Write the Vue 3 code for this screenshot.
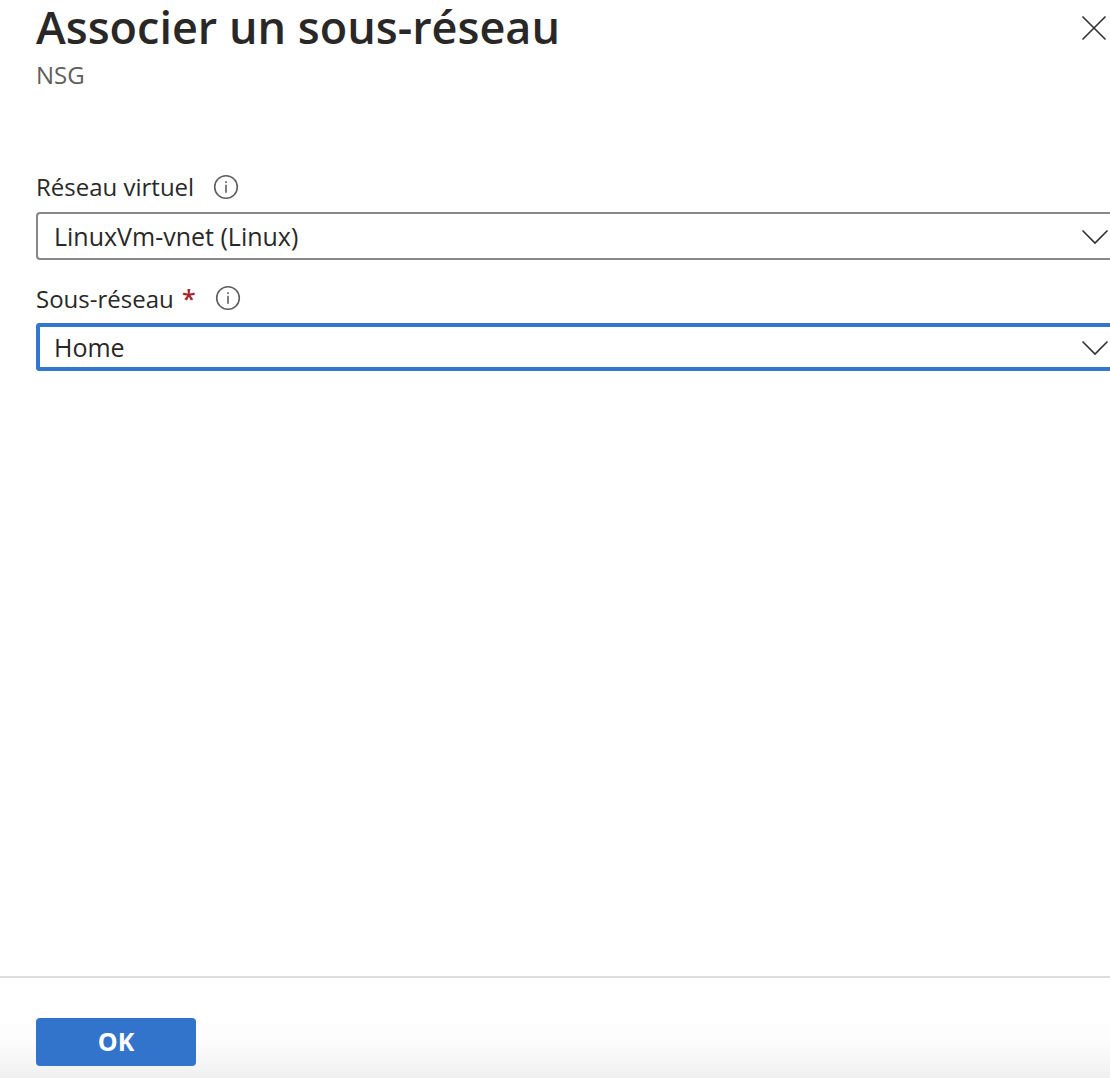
<script setup>
import { ref } from 'vue'

const network = ref('LinuxVm-vnet (Linux)')
const subnet = ref('Home')
</script>

<template>
  <form class="panel" @submit.prevent>
    <header class="header">
      <div>
        <h1 class="title">Associer un sous-réseau</h1>
        <p class="subtitle">NSG</p>
      </div>
      <button class="close" type="button" aria-label="Fermer">
        <svg width="26" height="26" viewBox="0 0 26 26">
          <path d="M1.5 1.5 24.5 24.5M24.5 1.5 1.5 24.5" />
        </svg>
      </button>
    </header>

    <main class="fields">
      <div class="field">
        <div class="caption">
          <label for="network">Réseau virtuel</label>
          <svg class="info" width="26" height="26" viewBox="0 0 26 26" aria-hidden="true">
            <circle cx="13" cy="13" r="11.3" />
            <path d="M13 10.8v8M13 7.2v1.8" />
          </svg>
        </div>
        <div class="picker">
          <select id="network" v-model="network">
            <option>LinuxVm-vnet (Linux)</option>
          </select>
          <svg class="chevron" width="28" height="16" viewBox="0 0 28 16" aria-hidden="true">
            <path d="M1.5 1.5 14 14 26.5 1.5" />
          </svg>
        </div>
      </div>

      <div class="field">
        <div class="caption">
          <label for="subnet">Sous-réseau <span class="required">*</span></label>
          <svg class="info" width="26" height="26" viewBox="0 0 26 26" aria-hidden="true">
            <circle cx="13" cy="13" r="11.3" />
            <path d="M13 10.8v8M13 7.2v1.8" />
          </svg>
        </div>
        <div class="picker active">
          <select id="subnet" v-model="subnet" required>
            <option>Home</option>
          </select>
          <svg class="chevron" width="28" height="16" viewBox="0 0 28 16" aria-hidden="true">
            <path d="M1.5 1.5 14 14 26.5 1.5" />
          </svg>
        </div>
      </div>
    </main>

    <footer class="footer">
      <button class="ok" type="submit">OK</button>
    </footer>
  </form>
</template>

<style>
body {
  margin: 0;
  background: #fff;
}
</style>

<style scoped>
.panel {
  display: flex;
  flex-direction: column;
  min-height: 100vh;
  color: #292827;
  font-family: "Open Sans", "Noto Sans", sans-serif;
  font-size: 24px;
  line-height: 32px;
}

.header {
  display: flex;
  justify-content: space-between;
  align-items: flex-start;
  padding-left: 36px;
}

.title {
  margin: 0;
  font-size: 45px;
  font-weight: 600;
  line-height: 54px;
}

.subtitle {
  margin: 5px 0 0;
  color: #605e5c;
}

.close {
  display: flex;
  margin: 15px 3px 0 0;
  padding: 0;
  border: 0;
  background: none;
}

svg {
  flex: none;
  fill: none;
  stroke: #323130;
  stroke-width: 1.6;
}

.fields {
  display: flex;
  flex: 1;
  flex-direction: column;
  gap: 22px;
  padding: 80px 0 40px 36px;
}

.caption {
  display: flex;
  align-items: center;
  gap: 19px;
  height: 32px;
  margin-bottom: 9px;
}

.required {
  margin-left: 2px;
  color: #a4262c;
  font-size: 25px;
  font-weight: 600;
}

.info {
  stroke: #605e5c;
}

.picker {
  position: relative;
}

select {
  display: block;
  box-sizing: border-box;
  width: 100%;
  height: 48px;
  padding: 0 48px 0 16px;
  border: 2px solid #8a8886;
  border-right: 0;
  border-radius: 4px 0 0 4px;
  outline: 0;
  background: #fff;
  color: inherit;
  font: inherit;
  font-size: 25px;
  appearance: none;
}

.active select {
  padding-left: 14px;
  border-width: 4px 0 4px 4px;
  border-color: #3276cf;
}

.chevron {
  position: absolute;
  top: 17px;
  right: 1px;
  pointer-events: none;
}

.footer {
  padding: 40px 36px 12px;
  border-top: 2px solid #dedede;
  background: linear-gradient(#fff 36%, #fcfcfc 65%, #f0f0f0);
}

.ok {
  display: block;
  width: 160px;
  height: 48px;
  padding: 0 0 3px;
  border: 0;
  border-radius: 4px;
  background: #3274cb;
  color: #fff;
  font: inherit;
  font-size: 25px;
  font-weight: 700;
}
</style>
